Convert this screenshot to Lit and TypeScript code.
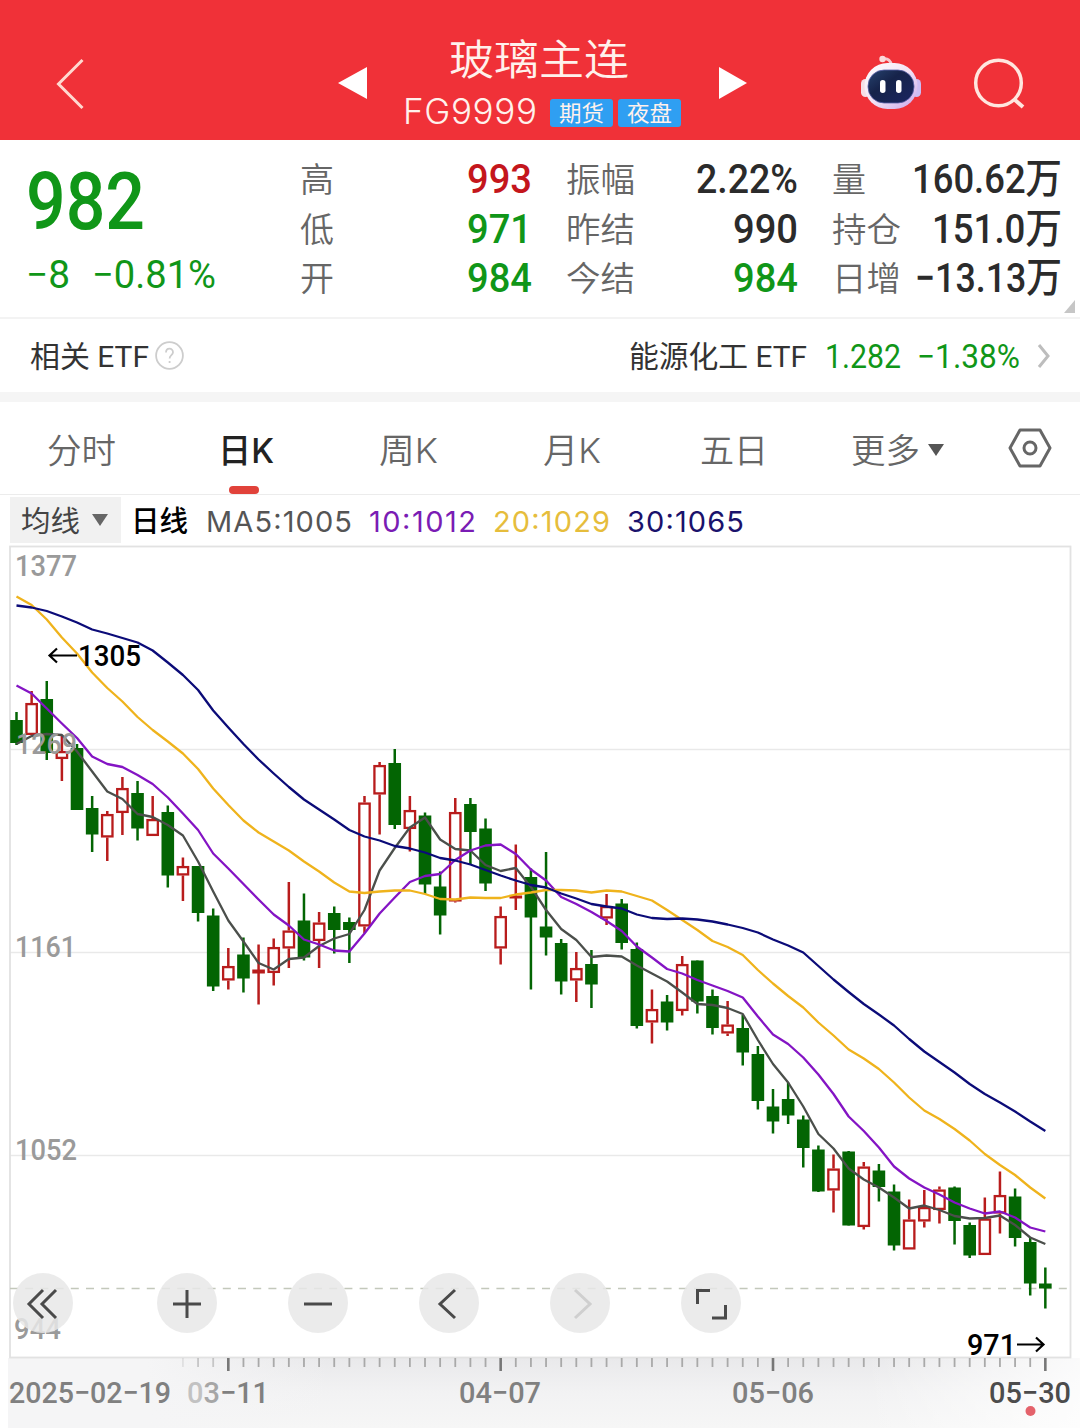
import {LitElement, html, svg, css} from 'lit';
import {customElement} from 'lit/decorators.js';

type Candle = [high: number, top: number, bottom: number, low: number, up?: number];

const STEP = 15.13;
const START = 16.5;
const xAt = (i: number) => START + i * STEP;

// y positions on the 811px tall plot, measured from the top of the page
const candles: Candle[] = [
  [712, 720, 743, 745], [691, 703, 735, 735, 1], [681, 699, 753, 760],
  [735, 751, 759, 781, 1], [744, 748, 810, 810], [796, 808, 834.5, 852],
  [811, 814, 837.5, 861, 1], [777, 788, 813, 835, 1], [781, 793, 828.5, 840.5],
  [796, 819, 836, 836, 1], [805.5, 812, 875.5, 887.5], [857.5, 866, 875.5, 901, 1],
  [866, 866, 913, 921.5], [908.5, 915.5, 986.5, 991], [948, 966, 980.5, 989.5, 1],
  [937.5, 954.5, 978.5, 992.5], [944.5, 969.5, 973.5, 1004.5, 1], [938.5, 947, 973, 985.5, 1],
  [882, 930.5, 948.5, 968, 1], [893.5, 920.5, 957.5, 960.5], [912, 922.5, 941, 968, 1],
  [906.5, 913, 930, 953.5], [917.5, 922, 930, 963], [796, 802.5, 926.5, 933, 1],
  [762, 765, 794.5, 834.5, 1], [749, 763, 825, 829], [796, 810, 829, 851.5, 1],
  [812.5, 815.5, 884.5, 894], [871.5, 886.5, 915.5, 934.5], [798, 812, 901.5, 902.5, 1],
  [798, 804, 832, 865], [818.5, 828.5, 883.5, 891], [906.5, 916, 948.5, 964.5, 1],
  [844.5, 895.5, 898.5, 910, 1], [868.5, 877, 917.5, 989.5], [852, 926.5, 937.5, 955.5],
  [939, 943, 981.5, 994.5], [952, 968, 980.5, 1002, 1], [950, 964, 984.5, 1008],
  [894, 906, 918.5, 925, 1], [899, 903.5, 943, 949.5], [942.5, 949, 1026, 1028.5],
  [989.5, 1009, 1022.5, 1043.5, 1], [995, 1001.5, 1022.5, 1030.5], [956, 964, 1011, 1015.5, 1],
  [960.5, 960.5, 1001.5, 1013.5], [989.5, 996, 1028, 1034.5], [1001, 1024.5, 1033.5, 1036, 1],
  [1015, 1028, 1052.5, 1065.5], [1046, 1054, 1101, 1109.5], [1089, 1106.5, 1121.5, 1133.5],
  [1082.5, 1099, 1115.5, 1124], [1115.5, 1119.5, 1148, 1167.5], [1145.5, 1149.5, 1191.5, 1192],
  [1154.5, 1168.5, 1190.5, 1212.5, 1], [1151, 1151.5, 1225.5, 1225.5], [1162, 1166.5, 1227, 1229.5, 1],
  [1164, 1170.5, 1187, 1201.5], [1184.5, 1191.5, 1245.5, 1250.5], [1199.5, 1219.5, 1249.5, 1249.5, 1],
  [1190, 1207, 1221.5, 1227.5, 1], [1186.5, 1189.5, 1210, 1223.5, 1], [1186.5, 1187.5, 1221, 1244.5],
  [1222.5, 1225, 1255.5, 1258], [1197.5, 1218.5, 1255, 1255, 1], [1171.5, 1195, 1213.5, 1233.5, 1],
  [1188.5, 1196.5, 1238, 1246.5], [1237.5, 1242, 1283.5, 1295.5], [1267.5, 1283.5, 1288.5, 1308.5],
];

const averages = [
  {
    name: 'ma5',
    ys: [744, 736, 734, 735, 751.5, 771.5, 791.5, 799, 814, 817, 825, 835.5, 861.5, 891.5, 920.5, 941.5, 963,
      969.5, 959, 957.5, 946, 938.5, 934, 910, 870.5, 848, 827.5, 817.5, 839.5, 849, 850.5, 865, 871, 868,
      887, 910, 929, 940, 957, 955.5, 956.5, 965.5, 973.5, 981.5, 992.5, 1004, 1005, 1008, 1014, 1040, 1064,
      1082.5, 1106.5, 1134, 1148.5, 1168.5, 1179.5, 1187.5, 1197.5, 1208.5, 1205.5, 1210, 1216, 1218.5,
      1218, 1215.5, 1225, 1237.5, 1244],
  },
  {
    name: 'ma10',
    ys: [685.5, 693.5, 708.5, 723.5, 738, 756.5, 764, 767, 775, 784, 797.5, 813.5, 830, 853.5, 868.5, 884,
      899.5, 914.5, 925.5, 939.5, 944.5, 950.5, 951.5, 933.5, 913.5, 897.5, 882, 876, 874, 860, 850.5,
      845.5, 844.5, 854, 869.5, 880.5, 897, 904, 912, 921, 931, 946.5, 957.5, 969, 973.5, 980, 985.5, 991,
      997.5, 1016.5, 1034.5, 1044, 1057.5, 1074.5, 1094, 1116.5, 1131, 1147.5, 1166.5, 1178.5, 1187.5,
      1194.5, 1202.5, 1208.5, 1213.5, 1211.5, 1217.5, 1227.5, 1231.5],
  },
  {
    name: 'ma20',
    ys: [596.5, 605, 619.5, 637.5, 653.5, 672.5, 688, 701.5, 717, 730, 741.5, 753.5, 769, 788.5, 805, 820.5,
      832.5, 841.5, 850.5, 861.5, 871.5, 882.5, 891.5, 893, 891.5, 890.5, 890.5, 894, 899, 899.5, 897.5,
      898, 898, 894.5, 892.5, 890, 890, 890.5, 892.5, 890.5, 891.5, 896, 900.5, 910, 920, 930, 941, 947,
      955, 970, 983.5, 996, 1007.5, 1022.5, 1035.5, 1049.5, 1058.5, 1069, 1082.5, 1097.5, 1110.5, 1119,
      1129, 1140.5, 1154, 1165, 1175, 1187.5, 1198.5],
  },
  {
    name: 'ma30',
    ys: [605.5, 607.5, 611, 616.5, 622.5, 629.5, 633.5, 638, 642.5, 650.5, 662.5, 675, 690, 710.5, 727.5,
      744, 759.5, 773.5, 787, 799.5, 809.5, 819.5, 830, 836.5, 840.5, 846, 848.5, 852.5, 858, 860.5, 864.5,
      870, 875.5, 880.5, 885, 887.5, 893.5, 898.5, 904, 906.5, 908.5, 914.5, 918, 919, 918.5, 919.5, 921.5,
      924.5, 928, 932.5, 939.5, 945.5, 952.5, 966, 979.5, 992, 1004, 1014.5, 1025.5, 1039, 1051.5, 1062,
      1072.5, 1084, 1094, 1102.5, 1111.5, 1121.5, 1131],
  },
];

const stats = [
  [['高', 34, '993', 65, 'red'], ['振幅', 69, '2.22%', 102, 'ink'], ['量', 34, '160.62万', 150, 'ink']],
  [['低', 34, '971', 65, 'green'], ['昨结', 69, '990', 65, 'ink'], ['持仓', 69, '151.0万', 130, 'ink']],
  [['开', 34, '984', 65, 'green'], ['今结', 69, '984', 65, 'green'], ['日增', 69, '−13.13万', 147, 'ink']],
] as [string, number, string, number, string][][];

// One line of text set to an exact width, by default by scaling its glyphs
const fit = (text: string, width: number, size: number, cls = '', adjust = 'spacingAndGlyphs') => html`
  <svg class="fit ${cls}" width=${width} height=${size}>
    <text x="0" y=${size * 0.87} font-size=${size} textLength=${width} lengthAdjust=${adjust}>${text}</text>
  </svg>
`;

const textStyles = css`
  svg {
    display: block;
    flex: none;
    overflow: visible;
  }

  text {
    font-family: Roboto, 'Noto Sans CJK SC', sans-serif;
    fill: currentColor;
    white-space: pre;
  }

  .inter text {
    font-family: Inter, 'Noto Sans CJK SC', sans-serif;
  }

  .light text {
    font-weight: 350;
  }

  .medium text {
    font-weight: 500;
  }

  .green {
    color: #109618;
  }

  .red {
    color: #c4161c;
  }

  .ink {
    color: #2b2b2b;
  }
`;

@customElement('quote-header')
export class QuoteHeader extends LitElement {
  static styles = [textStyles, css`
    :host {
      display: grid;
      grid-template-columns: 56px 282px 29px 352px 28px 114px 60px 104px;
      align-items: center;
      height: 140px;
      padding-top: 26px;
      box-sizing: border-box;
      background: #f03138;
      color: #fff1ec;
    }

    .title {
      display: flex;
      flex-direction: column;
      align-items: center;
      align-self: start;
      gap: 16px;
      padding-top: 12px;
    }

    .name {
      padding-right: 9px;
    }

    .code {
      display: flex;
      align-items: center;
      gap: 5px;
      padding-right: 3px;
    }

    .code .inter {
      margin: -2px 8px 0 0;
    }

    .tag {
      display: flex;
      align-items: center;
      justify-content: center;
      width: 63px;
      height: 28px;
      border-radius: 3px;
      background: #2f9ff2;
    }

    .search {
      justify-self: end;
    }
  `];

  render() {
    return html`
      <span></span>
      <svg width="28" height="52" viewBox="0 0 28 52">
        <path d="M26.5 3 L2.5 27 L26.5 51" fill="none" stroke="#ffd9d0" stroke-width="3"/>
      </svg>
      <svg width="29" height="32" viewBox="0 0 29 32"><path d="M0 16 L29 0 V32 Z" fill="#fff"/></svg>
      <div class="title">
        <div class="name">${fit('玻璃主连', 180, 42, 'light')}</div>
        <div class="code">
          ${fit('FG9999', 134, 35, 'inter light', 'spacing')}
          <span class="tag">${fit('期货', 45, 22)}</span>
          <span class="tag">${fit('夜盘', 45, 22)}</span>
        </div>
      </div>
      <svg width="28" height="32" viewBox="0 0 28 32"><path d="M28 16 L0 0 V32 Z" fill="#fff"/></svg>
      <span></span>
      <svg width="60" height="57" viewBox="0 0 60 57">
        <defs>
          <linearGradient id="shell" x1="0" y1="0" x2="1" y2="1">
            <stop offset="0" stop-color="#fff"/>
            <stop offset="0.5" stop-color="#f3e3f4"/>
            <stop offset="1" stop-color="#c9a5ec"/>
          </linearGradient>
          <linearGradient id="visor" x1="0" y1="0" x2="1" y2="1">
            <stop offset="0" stop-color="#27436f"/>
            <stop offset="0.4" stop-color="#16234a"/>
            <stop offset="1" stop-color="#1b2560"/>
          </linearGradient>
        </defs>
        <path d="M22 4 C27 3 30 6 30 10" fill="none" stroke="#f6c9cf" stroke-width="3"/>
        <circle cx="21.5" cy="4" r="3.2" fill="#fbd9da"/>
        <rect x="0" y="24" width="9" height="18" rx="4.5" fill="#f6dfe6"/>
        <rect x="51" y="24" width="9" height="18" rx="4.5" fill="#cdbcf3"/>
        <rect x="3.5" y="8" width="53" height="46" rx="23" fill="url(#shell)"/>
        <rect x="7" y="15" width="46" height="33" rx="16" fill="url(#visor)" stroke="#5b62a8" stroke-width="0.8"/>
        <rect x="19" y="25" width="5.5" height="13" rx="2.7" fill="#fff"/>
        <rect x="35" y="25" width="5.5" height="13" rx="2.7" fill="#fff"/>
      </svg>
      <svg class="search" width="51" height="52" viewBox="0 0 51 52">
        <circle cx="24.5" cy="26" r="22.8" fill="none" stroke="#ffe6df" stroke-width="3.5"/>
        <path d="M40.5 42.5 L49 50" stroke="#ffe6df" stroke-width="4"/>
      </svg>
    `;
  }
}

@customElement('kline-chart')
export class KlineChart extends LitElement {
  static styles = [textStyles, css`
    :host {
      display: block;
      position: relative;
    }

    .ma5 {
      stroke: #4b4f4b;
    }

    .ma10 {
      stroke: #8414c4;
    }

    .ma20 {
      stroke: #efb31c;
    }

    .ma30 {
      stroke: #0b0b78;
    }

    .average {
      fill: none;
      stroke-width: 2.3;
      stroke-linejoin: round;
    }

    .scale text {
      fill: #9a9a9a;
    }

    .mark text {
      fill: #000;
    }

    .dates text {
      fill: #808080;
    }

    .dates .today {
      fill: #4c4c4c;
    }

    .faded {
      fill: #c2c2c2;
    }

    .fading {
      fill: #a6a6a6;
    }

    .tools {
      position: absolute;
      left: 13px;
      top: 728px;
      display: flex;
      gap: 71px;
    }

    .tool {
      width: 60px;
      height: 60px;
      border-radius: 50%;
      background: rgba(232, 232, 232, 0.85);
    }

    .tool:first-child {
      margin-right: 13px;
    }

    .tool path {
      fill: none;
      stroke: #4a4a4a;
      stroke-width: 3;
    }

    .tool.off path {
      stroke: #cfcfcf;
    }
  `];

  private label(text: unknown, x: number, baseline: number, width: number, cls = '') {
    return svg`
      <text class=${cls} x=${x} y=${baseline} font-size="30" textLength=${width}
        lengthAdjust="spacingAndGlyphs">${text}</text>
    `;
  }

  private candle([high, top, bottom, low, up]: Candle, i: number) {
    const x = xAt(i);
    const color = up ? '#b81c1c' : '#036503';
    if (up && bottom - top > 5) {
      return svg`
        <path d="M${x} ${high} V${top} M${x} ${bottom} V${low}" stroke=${color} stroke-width="2.5"/>
        <rect x=${x - 5.2} y=${top + 1.1} width="10.4" height=${bottom - top - 2.2}
          fill="#fff" stroke=${color} stroke-width="2.3"/>
      `;
    }
    return svg`
      <path d="M${x} ${high} V${low}" stroke=${color} stroke-width="2.5"/>
      <rect x=${x - 6.3} y=${top} width="12.6" height=${bottom - top} fill=${color}/>
    `;
  }

  private tick(i: number) {
    const major = (i - 14) % 18 === 0;
    const opacity = i < 12 ? 0.25 : i < 14 ? 0.6 : 1;
    return svg`
      <path d="M${xAt(i)} 1358 V${major ? 1371 : 1367}" stroke=${major ? '#777' : '#a9a9a9'}
        stroke-width=${major ? 2.6 : 1.8} opacity=${opacity}/>
    `;
  }

  render() {
    return html`
      <svg width="1080" height="883" viewBox="0 545 1080 883">
        <defs>
          <linearGradient id="axis" x1="0" y1="0" x2="0" y2="1">
            <stop offset="0" stop-color="#e9e9eb"/>
            <stop offset="0.5" stop-color="#f2f2f3"/>
            <stop offset="1" stop-color="#f6f6f6"/>
          </linearGradient>
          <linearGradient id="fade" x1="0" y1="0" x2="1" y2="0">
            <stop offset="0" stop-color="#f5f5f6"/>
            <stop offset="0.13" stop-color="#f5f5f6"/>
            <stop offset="0.3" stop-color="#f5f5f6" stop-opacity="0"/>
            <stop offset="0.8" stop-color="#fff" stop-opacity="0"/>
            <stop offset="1" stop-color="#fff" stop-opacity="0.8"/>
          </linearGradient>
        </defs>
        <rect x="8" y="1358" width="1072" height="70" fill="url(#axis)"/>
        <rect x="8" y="1358" width="1072" height="70" fill="url(#fade)"/>
        <path d="M10 749.5 H1070 M10 952.5 H1070 M10 1155.5 H1070" stroke="#e9e9e9" stroke-width="1.3"/>
        <rect x="10" y="546.5" width="1060.5" height="811" fill="none" stroke="#e2e2e2" stroke-width="1.8"/>
        <path d="M10 1288.5 H1070" stroke="#c3c8bb" stroke-width="1.5" stroke-dasharray="8 7.2"/>
        ${candles.map((c, i) => this.candle(c, i))}
        ${averages.map(a => svg`
          <polyline class="average ${a.name}" points=${a.ys.map((y, i) => `${xAt(i)},${y}`).join(' ')}/>
        `)}
        <g class="scale medium">
          ${this.label('1377', 15, 576, 62)}
          ${this.label('1269', 16, 754, 61)}
          ${this.label('1161', 15, 957, 61)}
          ${this.label('1052', 15, 1160, 62)}
          ${this.label('944', 14, 1339, 47)}
        </g>
        <g class="mark medium">
          ${this.label('1305', 78, 666, 63)}
          ${this.label('971', 967, 1355, 49)}
          <path d="M77 655.5 H50 M57 648.5 L49.5 655.5 L57 662.5 M1017 1344.5 H1043 M1036 1337.5 L1043.5 1344.5 L1036 1351.5"
            fill="none" stroke="#000" stroke-width="2.2"/>
        </g>
        ${candles.map((_, i) => (i > 10 ? this.tick(i) : ''))}
        <g class="dates medium">
          ${this.label('2025−02−19', 9, 1403, 162)}
          ${this.label(svg`<tspan class="faded">0</tspan><tspan class="fading">3</tspan>−11`, 187, 1403, 82)}
          ${this.label('04−07', 459, 1403, 82)}
          ${this.label('05−06', 732, 1403, 82)}
          ${this.label('05−30', 989, 1403, 82, 'today')}
        </g>
        <circle cx="1030.5" cy="1411" r="5" fill="#e4626b"/>
      </svg>
      <div class="tools">
        ${this.tool('M30 17 L16 31 L30 45 M43 17 L29 31 L43 45')}
        ${this.tool('M30 17 V45 M16 31 H44')}
        ${this.tool('M16 31 H44')}
        ${this.tool('M36 17 L21 31 L36 45')}
        ${this.tool('M25 17 L40 31 L25 45', true)}
        ${this.tool('M29 17.5 H16.5 V31 M31 45 H44.5 V32')}
      </div>
    `;
  }

  private tool(d: string, off = false) {
    return html`
      <span class="tool ${off ? 'off' : ''}">
        <svg width="60" height="60" viewBox="0 0 60 60"><path d=${d}/></svg>
      </span>
    `;
  }
}

@customElement('app-root')
export class AppRoot extends LitElement {
  static styles = [textStyles, css`
    :host {
      display: block;
      width: 1080px;
      height: 1428px;
      overflow: hidden;
      background: #fff;
    }

    .quote {
      position: relative;
      display: flex;
      height: 179px;
      box-sizing: border-box;
      padding-right: 18px;
      border-bottom: 2px solid #f3f3f3;
    }

    .last {
      flex: 1;
      display: flex;
      flex-direction: column;
      gap: 15px;
      padding: 20px 0 0 26px;
    }

    .change {
      display: flex;
      gap: 22px;
    }

    .stats {
      display: grid;
      grid-template-columns: 231px 231px 229px;
      grid-auto-rows: 49.5px;
      column-gap: 35px;
      padding-top: 13px;
    }

    .stat {
      display: flex;
      align-items: center;
      justify-content: space-between;
    }

    .label {
      margin: 3px 0 0 -1px;
      color: #666;
    }

    .corner {
      position: absolute;
      right: 5px;
      bottom: 4px;
    }

    .etf {
      display: flex;
      align-items: center;
      height: 73px;
      padding: 0 30px;
      border-bottom: 10px solid #f5f5f5;
      color: #333;
    }

    .etf .hint {
      margin-left: 6px;
    }

    .etf .fund {
      margin-left: auto;
    }

    .etf .price {
      margin: 0 16px 0 18px;
    }

    .etf .more {
      margin-left: 18px;
    }

    .tabs {
      display: grid;
      grid-template-columns: 163px 163px 164px 163px 162px 164px 101px;
      align-items: center;
      justify-items: center;
      height: 93px;
      box-sizing: border-box;
      border-bottom: 1px solid #ececec;
      color: #666;
    }

    .tab {
      position: relative;
      display: flex;
      align-items: center;
      gap: 8px;
      padding-top: 3px;
    }

    .tab.active {
      padding-left: 2px;
      color: #222;
    }

    .tab.active::after {
      content: '';
      position: absolute;
      left: 13px;
      bottom: -27px;
      width: 30px;
      height: 8px;
      border-radius: 4px;
      background: #e1423a;
    }

    .legend {
      display: flex;
      align-items: center;
      height: 50px;
      padding-left: 10px;
    }

    .legend .fit {
      margin-top: 2px;
    }

    .picker {
      display: flex;
      align-items: center;
      gap: 12px;
      width: 111px;
      height: 46px;
      margin-right: 10px;
      padding-left: 11px;
      box-sizing: border-box;
      background: #f1f1f1;
      color: #444;
    }

    .legend .ma5 {
      margin: 2px 17px 0 18px;
      color: #555;
    }

    .legend .ma10 {
      color: #7a1cb4;
    }

    .legend .ma20 {
      margin: 2px 17px 0;
      color: #e6bd3c;
    }

    .legend .ma30 {
      color: #1a126c;
    }
  `];

  render() {
    return html`
      <quote-header></quote-header>
      <section class="quote">
        <div class="last">
          ${fit('982', 119, 79, 'medium green')}
          <div class="change">
            ${fit('−8', 44, 39, 'green')}
            ${fit('−0.81%', 124, 39, 'green')}
          </div>
        </div>
        <div class="stats">
          ${stats.flat().map(([label, labelWidth, value, width, color]) => html`
            <div class="stat">
              ${fit(label, labelWidth, 34, 'label light')}
              ${fit(value, width, 41, `medium ${color}`)}
            </div>
          `)}
        </div>
        <svg class="corner" width="11" height="13" viewBox="0 0 11 13"><path d="M11 0 V13 H0 Z" fill="#c6c6c6"/></svg>
      </section>
      <section class="etf">
        ${fit('相关 ETF', 119, 30)}
        <svg class="hint" width="29" height="29" viewBox="0 0 29 29">
          <circle cx="14.5" cy="14.5" r="13.4" fill="none" stroke="#cdcdcd" stroke-width="1.8"/>
          <path d="M11 11.5 C11 6.5 18 6.5 18 11.2 C18 14.2 14.6 14 14.6 17.5 M14.6 20 V22"
            fill="none" stroke="#cdcdcd" stroke-width="1.8"/>
        </svg>
        ${fit('能源化工 ETF', 178, 30, 'fund')}
        ${fit('1.282', 76, 33, 'green price')}
        ${fit('−1.38%', 103, 33, 'green')}
        <svg class="more" width="12" height="24" viewBox="0 0 12 24">
          <path d="M1 1 L10 12 L1 23" fill="none" stroke="#bdbdbd" stroke-width="3"/>
        </svg>
      </section>
      <nav class="tabs">
        <span class="tab">${fit('分时', 69, 34, 'light')}</span>
        <span class="tab active">${fit('日K', 56, 34, 'inter medium')}</span>
        <span class="tab">${fit('周K', 59, 34, 'inter light')}</span>
        <span class="tab">${fit('月K', 58, 34, 'inter light')}</span>
        <span class="tab">${fit('五日', 68, 34, 'light')}</span>
        <span class="tab">
          ${fit('更多', 69, 34, 'light')}
          <svg width="16" height="12" viewBox="0 0 16 12"><path d="M0 0 H16 L8 12 Z" fill="#555"/></svg>
        </span>
        <svg width="44" height="40" viewBox="0 0 44 40">
          <path d="M12 2 H32 L42 20 L32 38 H12 L2 20 Z" fill="none" stroke="#666" stroke-width="3" stroke-linejoin="round"/>
          <circle cx="22" cy="20" r="6" fill="none" stroke="#666" stroke-width="3"/>
        </svg>
      </nav>
      <div class="legend">
        <div class="picker">
          ${fit('均线', 59, 29)}
          <svg width="16" height="12" viewBox="0 0 16 12"><path d="M0 0 H16 L8 12 Z" fill="#666"/></svg>
        </div>
        ${fit('日线', 57, 29, 'medium')}
        ${fit('MA5:1005', 146, 29, 'inter ma5', 'spacing')}
        ${fit('10:1012', 107, 29, 'inter ma10', 'spacing')}
        ${fit('20:1029', 117, 29, 'inter ma20', 'spacing')}
        ${fit('30:1065', 117, 29, 'inter ma30', 'spacing')}
      </div>
      <kline-chart></kline-chart>
    `;
  }
}
